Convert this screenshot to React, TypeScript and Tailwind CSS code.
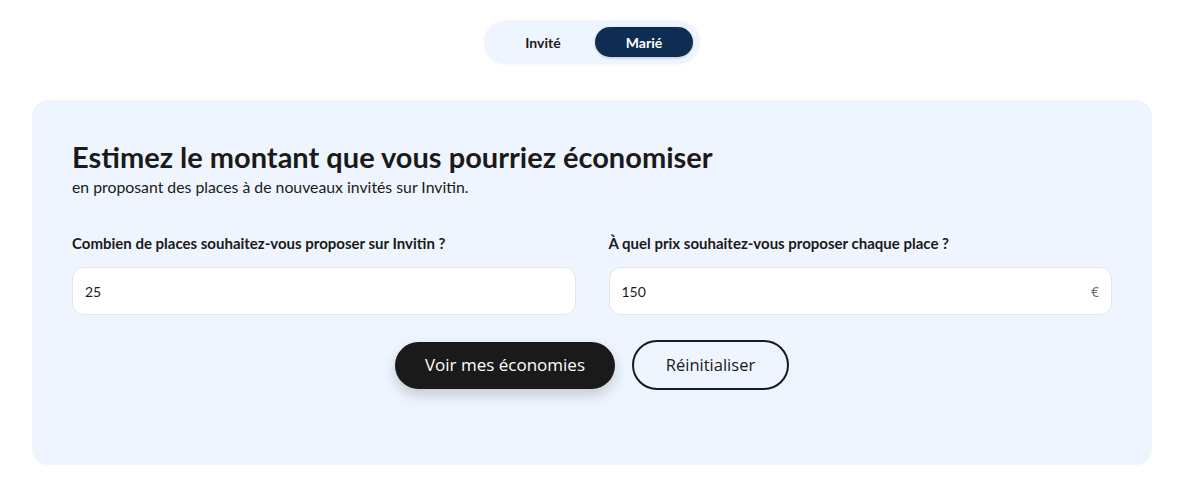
export default function App() {
  return (
    <div className="min-h-[498px] bg-white pl-8 pr-[30px] pt-5 font-['Lato',sans-serif] text-[#1a1a1a]">
      <div className="flex justify-center">
        <div className="flex h-11 w-[216px] items-center rounded-full bg-[#eef5fe] px-[7px] shadow-[0_1px_3px_rgba(0,0,0,0.04)]">
          <button className="h-[30px] flex-1 rounded-full text-[14px] font-bold text-[#1a1a1a]">Invité</button>
          <button className="h-[30px] w-[98px] rounded-full bg-[#0f2d52] text-[14px] font-bold text-white shadow-[0_1px_3px_rgba(0,0,0,0.2)]">
            Marié
          </button>
        </div>
      </div>

      <div className="mt-9 rounded-2xl bg-[#eef5fe] px-10 pb-[75px] pt-[39px]">
        <h2 className="text-[29px] font-bold leading-[36px] text-[#1a1a1a]">Estimez le montant que vous pourriez économiser</h2>
        <p className="mt-[2px] text-[15.8px] leading-5 text-[#1a1a1a]">en proposant des places à de nouveaux invités sur Invitin.</p>

        <div className="mt-[36px] grid grid-cols-2 gap-[33px]">
          <div>
            <label className="block text-[15px] font-bold leading-5">Combien de places souhaitez-vous proposer sur Invitin ?</label>
            <div className="mt-[14px] flex h-[48px] items-center rounded-xl border border-[#e3e6ea] bg-white px-3 text-[14px]">25</div>
          </div>
          <div>
            <label className="block text-[15px] font-bold leading-5">À quel prix souhaitez-vous proposer chaque place ?</label>
            <div className="mt-[14px] flex h-[48px] items-center justify-between rounded-xl border border-[#e3e6ea] bg-white px-3 text-[14px]">
              <span>150</span>
              <span className="font-['Open_Sans',sans-serif] text-[#6b6b6b]">€</span>
            </div>
          </div>
        </div>

        <div className="mt-[25px] flex items-center justify-center gap-[17px] font-['Open_Sans',sans-serif]">
          <button className="h-[47px] w-[220px] rounded-full bg-[#1a1a1a] text-[17px] text-white shadow-[0_6px_14px_rgba(0,0,0,0.18)]">
            Voir mes économies
          </button>
          <button className="h-[50px] w-[157px] rounded-full border-2 border-[#1a1a1a] text-[16.5px] text-[#1a1a1a]">
            Réinitialiser
          </button>
        </div>
      </div>
    </div>
  )
}
